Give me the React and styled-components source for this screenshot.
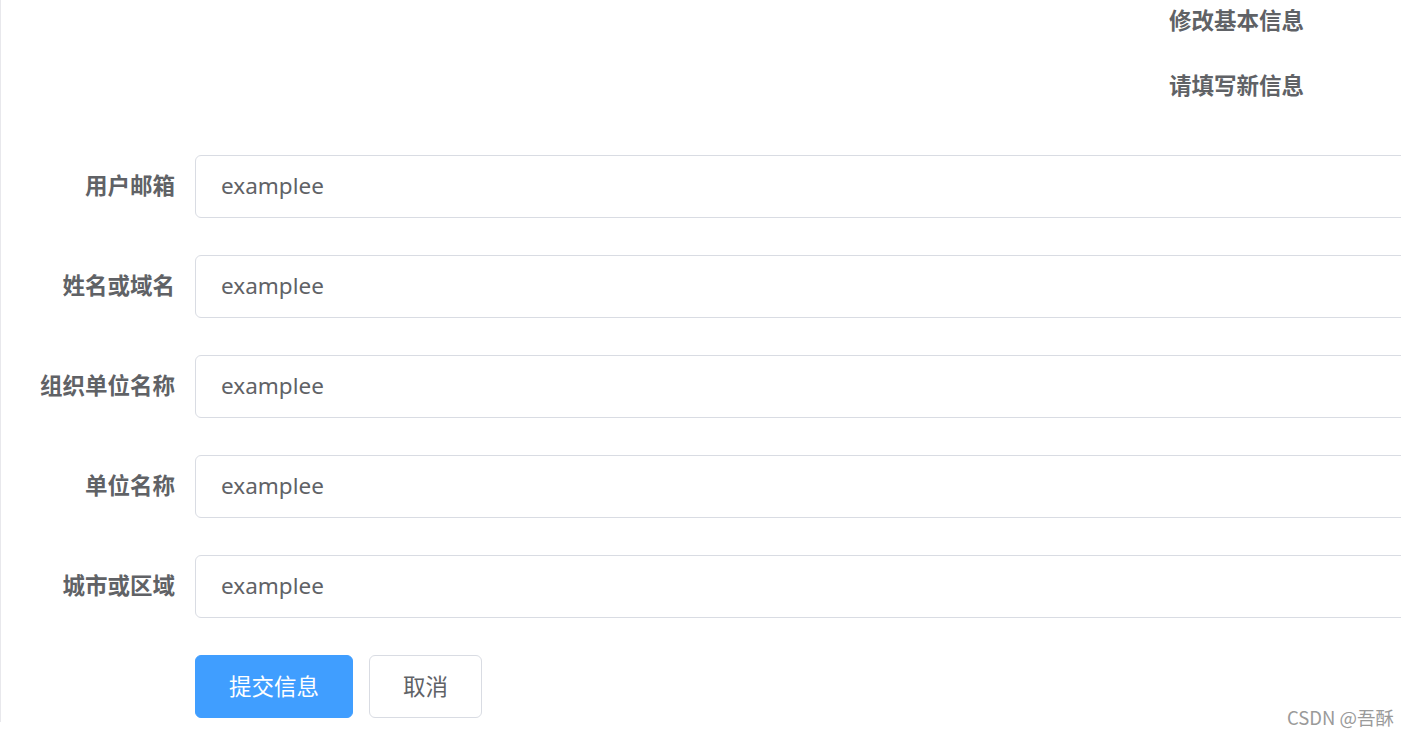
import styled, { createGlobalStyle } from "styled-components";

const GlobalStyle = createGlobalStyle`
  html, body {
    margin: 0;
    padding: 0;
    background: #fff;
  }
  body {
    font-family: "Noto Sans", "Noto Sans CJK SC", sans-serif;
    color: #606266;
  }
`;

const fields = ["用户邮箱", "姓名或域名", "组织单位名称", "单位名称", "城市或区域"];

function App() {
  return (
    <>
      <GlobalStyle />
      <Page>
        <Header>
          <Title>修改基本信息</Title>
          <Title>请填写新信息</Title>
        </Header>
        <Form>
          {fields.map((label) => (
            <Row key={label}>
              <Label>{label}</Label>
              <Input defaultValue="examplee" />
            </Row>
          ))}
          <Row>
            <Label />
            <Actions>
              <Button primary>提交信息</Button>
              <Button>取消</Button>
            </Actions>
          </Row>
        </Form>
      </Page>
      <Watermark>CSDN @吾酥</Watermark>
    </>
  );
}

const Page = styled.div`
  width: 1400px;
  height: 722px;
  border-left: 1px solid #e8e8ec;
  overflow: hidden;
  display: flex;
  flex-direction: column;
`;

const Header = styled.div`
  display: flex;
  flex-direction: column;
  gap: 35px;
  padding: 4px 0 0 1168px;
`;

const Title = styled.div`
  font-family: "Noto Sans CJK SC", sans-serif;
  font-size: 22.5px;
  font-weight: 700;
  line-height: 30px;
  color: #606266;
  white-space: nowrap;
`;

const Form = styled.div`
  display: flex;
  flex-direction: column;
  gap: 37px;
  margin-top: 56px;
`;

const Row = styled.div`
  display: flex;
  align-items: center;
  height: 63px;
`;

const Label = styled.label`
  flex: 0 0 174px;
  padding: 0 20px 6px 0;
  text-align: right;
  font-family: "Noto Sans CJK SC", sans-serif;
  font-size: 22.5px;
  font-weight: 700;
  color: #606266;
  white-space: nowrap;
`;

const Input = styled.input`
  flex: 0 0 1240px;
  box-sizing: border-box;
  height: 63px;
  padding: 0 25px 2px;
  border: 1.5px solid #d9dce3;
  border-radius: 6px;
  font-family: "Noto Sans", "Noto Sans CJK SC", sans-serif;
  font-size: 22.5px;
  color: #606266;
  background: #fff;
  outline: none;
`;

const Actions = styled.div`
  display: flex;
  gap: 16px;
`;

const Button = styled.button`
  box-sizing: border-box;
  height: 63px;
  width: ${(p) => (p.primary ? "158px" : "113px")};
  padding: 0 0 4px;
  border: 1.5px solid ${(p) => (p.primary ? "#409eff" : "#d9dce3")};
  border-radius: 6px;
  background: ${(p) => (p.primary ? "#409eff" : "#fff")};
  color: ${(p) => (p.primary ? "#fff" : "#606266")};
  font-family: "Noto Sans CJK SC", sans-serif;
  font-size: 22.5px;
  cursor: pointer;
`;

const Watermark = styled.div`
  position: absolute;
  left: 1287px;
  top: 704px;
  font-family: "Noto Sans CJK SC", sans-serif;
  font-size: 18.5px;
  color: #9a9a9a;
  white-space: nowrap;
`;

export default App;
